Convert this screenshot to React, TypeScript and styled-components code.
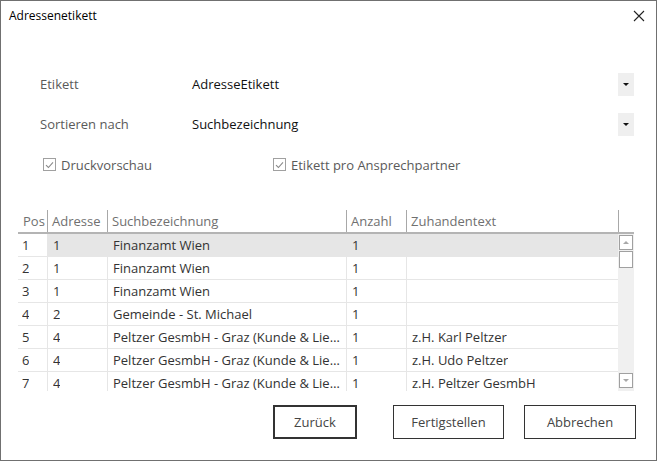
import React from "react";
import styled, { createGlobalStyle } from "styled-components";

const Global = createGlobalStyle`
  html, body { margin: 0; padding: 0; background: #fff; }
  body { font-family: "Open Sans", "Noto Sans", Arial, sans-serif; }
  * { box-sizing: border-box; }
`;

const Window = styled.div`
  width: 657px;
  height: 461px;
  border: 1px solid #707070;
  background: #fff;
  display: flex;
  flex-direction: column;
  overflow: hidden;
`;

const TitleBar = styled.div`
  height: 29px;
  display: flex;
  align-items: center;
  justify-content: space-between;
  padding: 0 8px 0 8px;
  font-size: 12px;
  color: #000;
`;

const CloseButton = styled.div`
  width: 14px;
  height: 14px;
  display: flex;
  align-items: center;
  justify-content: center;
  margin-right: 2px;
`;

const Form = styled.div`
  margin-top: 43px;
  padding: 0 22px 0 39px;
  display: flex;
  flex-direction: column;
  gap: 17px;
`;

const FormRow = styled.div`
  display: grid;
  grid-template-columns: 152px 1fr 16px;
  height: 23px;
  align-items: center;
  font-size: 13px;
`;

const Label = styled.div`
  color: #5a5a5a;
  padding-bottom: 2px;
`;

const Value = styled.div`
  color: #111;
  padding-bottom: 2px;
`;

const DropButton = styled.div`
  width: 16px;
  height: 23px;
  background: #efefef;
  display: flex;
  align-items: center;
  justify-content: center;
`;

const Caret = styled.div`
  width: 0;
  height: 0;
  border-left: 3px solid transparent;
  border-right: 3px solid transparent;
  border-top: 3px solid #111;
`;

const CheckRow = styled.div`
  display: grid;
  grid-template-columns: 230px 1fr;
  padding-left: 3px;
  height: 23px;
  align-items: center;
`;

const CheckItem = styled.div`
  display: flex;
  align-items: center;
  gap: 5px;
  font-size: 13px;
  color: #5a5a5a;
`;

const Box = styled.div`
  width: 13px;
  height: 13px;
  border: 1px solid #a0a0a0;
  display: flex;
  align-items: center;
  justify-content: center;
`;

const Table = styled.div`
  margin: 33px 22px 0 17px;
  height: 182px;
  display: flex;
  flex-direction: column;
  overflow: hidden;
  font-size: 13px;
`;

const cols = "29px 60px 239px 60px 212px 16px";

const HeaderRow = styled.div`
  display: grid;
  grid-template-columns: ${cols};
  height: 25px;
  border-bottom: 2px solid #b4b4b4;
  color: #707070;
`;

const HeaderCell = styled.div<{ $sep?: boolean }>`
  display: flex;
  align-items: center;
  padding-left: 4px;
  height: 22px;
  margin-top: 1px;
  border-left: ${(p) => (p.$sep ? "1px solid #a8a8a8" : "1px solid transparent")};
  white-space: nowrap;
`;

const BodyArea = styled.div`
  position: relative;
  flex: 1;
  overflow: hidden;
`;

const BodyRow = styled.div`
  display: grid;
  grid-template-columns: 29px 60px 239px 60px 212px;
  height: 23px;
  border-bottom: 1px solid #e6e6e6;
  margin-right: 16px;
  color: #333;
`;

const Cell = styled.div<{ $sel?: boolean; $first?: boolean }>`
  display: flex;
  align-items: center;
  padding-left: ${(p) => (p.$first ? "4px" : "5px")};
  padding-right: 2px;
  border-left: ${(p) => (p.$first ? "none" : "1px solid #e6e6e6")};
  background: ${(p) => (p.$sel ? "#e6e6e6" : "transparent")};
  white-space: nowrap;
  overflow: hidden;
  min-width: 0;
`;

const CellText = styled.span`
  overflow: hidden;
  text-overflow: ellipsis;
  white-space: nowrap;
`;

const ScrollTrack = styled.div`
  position: absolute;
  right: 0;
  top: 0;
  bottom: 0;
  width: 16px;
  background: #f0f0f0;
  display: flex;
  flex-direction: column;
  padding: 1px 1px 3px 1px;
`;

const ScrollBtn = styled.div`
  width: 14px;
  height: 15px;
  border: 1px solid #a0a0a0;
  background: #fff;
  display: flex;
  align-items: center;
  justify-content: center;
`;

const Thumb = styled.div`
  width: 14px;
  height: 17px;
  border: 1px solid #a0a0a0;
  background: #fff;
  margin-top: 1px;
`;

const Spacer = styled.div`
  flex: 1;
`;

const Tri = styled.div<{ $up?: boolean }>`
  width: 0;
  height: 0;
  border-left: 3px solid transparent;
  border-right: 3px solid transparent;
  ${(p) => (p.$up ? "border-bottom: 3px solid #a8a8a8;" : "border-top: 3px solid #a8a8a8;")}
`;

const Footer = styled.div`
  margin-top: 14px;
  padding-right: 20px;
  display: flex;
  justify-content: flex-end;
`;

const Button = styled.div<{ $default?: boolean; $ml: number; $w: number }>`
  height: 34px;
  margin-left: ${(p) => p.$ml}px;
  width: ${(p) => p.$w}px;
  border: ${(p) => (p.$default ? "2px solid #333" : "1px solid #333")};
  display: flex;
  align-items: center;
  justify-content: center;
  padding-bottom: 1px;
  font-size: 13px;
  color: #444;
  background: #fff;
`;

const rows: [string, string, string, string, string][] = [
  ["1", "1", "Finanzamt Wien", "1", ""],
  ["2", "1", "Finanzamt Wien", "1", ""],
  ["3", "1", "Finanzamt Wien", "1", ""],
  ["4", "2", "Gemeinde - St. Michael", "1", ""],
  ["5", "4", "Peltzer GesmbH - Graz (Kunde & Lieferant)", "1", "z.H. Karl Peltzer"],
  ["6", "4", "Peltzer GesmbH - Graz (Kunde & Lieferant)", "1", "z.H. Udo Peltzer"],
  ["7", "4", "Peltzer GesmbH - Graz (Kunde & Lieferant)", "1", "z.H. Peltzer GesmbH"],
];

const Check = () => (
  <Box>
    <svg width="9" height="8" viewBox="0 0 9 8">
      <path d="M1 4.2 L3.4 6.5 L8 1.3" fill="none" stroke="#8a8a8a" strokeWidth="1.1" />
    </svg>
  </Box>
);

export default function App() {
  return (
    <>
      <Global />
      <Window>
        <TitleBar>
          <span>Adressenetikett</span>
          <CloseButton>
            <svg width="12" height="12" viewBox="0 0 12 12">
              <path d="M1 1 L11 11 M11 1 L1 11" stroke="#222" strokeWidth="1.1" />
            </svg>
          </CloseButton>
        </TitleBar>
        <Form>
          <FormRow>
            <Label>Etikett</Label>
            <Value>AdresseEtikett</Value>
            <DropButton>
              <Caret />
            </DropButton>
          </FormRow>
          <FormRow>
            <Label>Sortieren nach</Label>
            <Value>Suchbezeichnung</Value>
            <DropButton>
              <Caret />
            </DropButton>
          </FormRow>
          <CheckRow>
            <CheckItem>
              <Check />
              Druckvorschau
            </CheckItem>
            <CheckItem>
              <Check />
              Etikett pro Ansprechpartner
            </CheckItem>
          </CheckRow>
        </Form>
        <Table>
          <HeaderRow>
            <HeaderCell>Pos</HeaderCell>
            <HeaderCell $sep>Adresse</HeaderCell>
            <HeaderCell $sep>Suchbezeichnung</HeaderCell>
            <HeaderCell $sep>Anzahl</HeaderCell>
            <HeaderCell $sep>Zuhandentext</HeaderCell>
            <HeaderCell $sep />
          </HeaderRow>
          <BodyArea>
            {rows.map((r, i) => (
              <BodyRow key={i}>
                {r.map((c, j) => (
                  <Cell key={j} $first={j === 0} $sel={i === 0 && j > 0}>
                    <CellText>{c}</CellText>
                  </Cell>
                ))}
              </BodyRow>
            ))}
            <ScrollTrack>
              <ScrollBtn>
                <Tri $up />
              </ScrollBtn>
              <Thumb />
              <Spacer />
              <ScrollBtn>
                <Tri />
              </ScrollBtn>
            </ScrollTrack>
          </BodyArea>
        </Table>
        <Footer>
          <Button $default $ml={0} $w={84}>Zurück</Button>
          <Button $ml={36} $w={111}>Fertigstellen</Button>
          <Button $ml={20} $w={112}>Abbrechen</Button>
        </Footer>
      </Window>
    </>
  );
}
